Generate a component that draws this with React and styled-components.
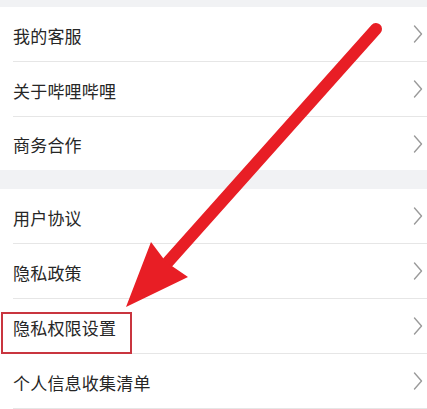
import React from "react";
import styled, { createGlobalStyle } from "styled-components";

const Global = createGlobalStyle`
  html, body { margin: 0; padding: 0; background: #f1f2f4; }
  body { font-family: "Noto Sans CJK SC", "Noto Sans", sans-serif; }
`;

const Page = styled.div`
  position: relative;
  width: 427px;
  height: 409px;
  overflow: hidden;
  background: #f1f2f4;
  padding-top: 7px;
  box-sizing: border-box;
  display: flex;
  flex-direction: column;
  gap: 19px;
`;

const Section = styled.div`
  background: #fff;
  display: flex;
  flex-direction: column;
`;

const Row = styled.div`
  height: ${(p) => p.$h}px;
  margin-left: 13px;
  padding-right: 4px;
  display: flex;
  align-items: center;
  justify-content: space-between;
  border-bottom: ${(p) => (p.$last ? "none" : "1px solid #e6e6e6")};
  box-sizing: border-box;
`;

const Label = styled.span`
  font-size: 17px;
  color: #262626;
  letter-spacing: 0.2px;
  line-height: 1;
  padding-top: 2px;
`;

const Overlay = styled.svg`
  position: absolute;
  left: 0;
  top: 0;
  pointer-events: none;
`;

const Chevron = () => (
  <svg width="10" height="18" viewBox="0 0 10 18">
    <path d="M1.5 1 L8.5 9 L1.5 17" fill="none" stroke="#9a9a9a" strokeWidth="1.4" strokeLinecap="round" strokeLinejoin="round" />
  </svg>
);

const top = ["我的客服", "关于哔哩哔哩", "商务合作"];
const bottom = ["用户协议", "隐私政策", "隐私权限设置", "个人信息收集清单"];

export default function App() {
  return (
    <>
      <Global />
      <Page>
        <Section>
          {top.map((t, i) => (
            <Row key={t} $h={i === 2 ? 53 : 55} $last={i === 2}>
              <Label>{t}</Label>
              <Chevron />
            </Row>
          ))}
        </Section>
        <Section>
          {bottom.map((t) => (
            <Row key={t} $h={55}>
              <Label>{t}</Label>
              <Chevron />
            </Row>
          ))}
        </Section>
        <Overlay width="427" height="409" viewBox="0 0 427 409">
          <line x1="376" y1="29" x2="168" y2="262" stroke="#e81e25" strokeWidth="12" strokeLinecap="round" />
          <polygon points="126,307 151,242 166,262 188,277" fill="#e81e25" />
          <rect x="2" y="313" width="129" height="40" fill="none" stroke="#c9353f" strokeWidth="2" />
        </Overlay>
      </Page>
    </>
  );
}
